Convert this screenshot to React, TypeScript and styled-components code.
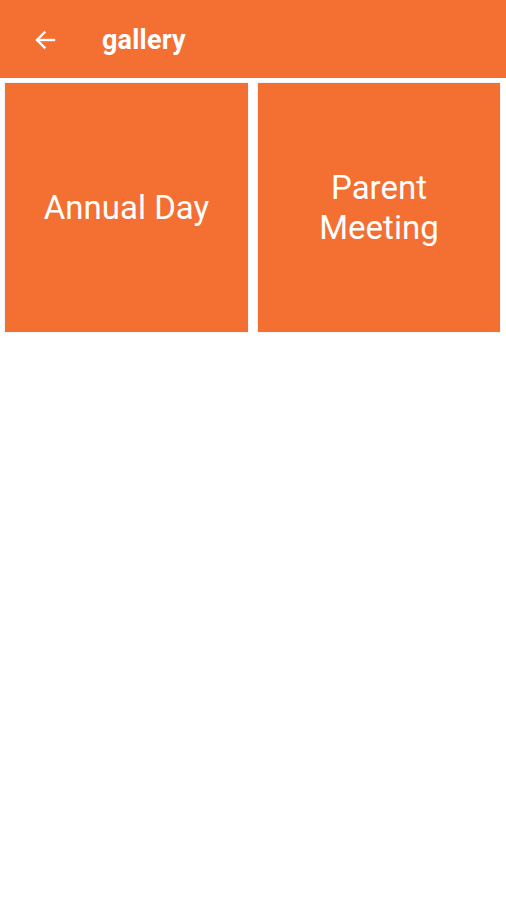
import React from 'react';
import styled, { createGlobalStyle } from 'styled-components';

const GlobalStyle = createGlobalStyle`
    html, body {
        margin: 0;
        padding: 0;
        background: #ffffff;
        font-family: Roboto, "Noto Sans", sans-serif;
    }
`;

const ORANGE = '#f36f32';

const Page = styled.div`
    width: 506px;
    min-height: 900px;
    background: #ffffff;
`;

const Toolbar = styled.header`
    height: 78px;
    background: ${ORANGE};
    display: flex;
    align-items: center;
    padding-left: 32px;
    padding-top: 2px;
    box-sizing: border-box;
    color: #ffffff;
`;

const BackButton = styled.button`
    border: none;
    background: transparent;
    padding: 0;
    width: 26px;
    height: 26px;
    display: flex;
    align-items: center;
    justify-content: center;
    color: #ffffff;
    cursor: pointer;
`;

const Title = styled.h1`
    margin: 0 0 0 44px;
    font-size: 27px;
    font-weight: 700;
    letter-spacing: 0.2px;
`;

const Grid = styled.div`
    display: grid;
    grid-template-columns: 243px 242px;
    column-gap: 10px;
    padding: 5px 5px 0 5px;
`;

const Tile = styled.div`
    height: 249px;
    background: ${ORANGE};
    display: flex;
    align-items: center;
    justify-content: center;
    text-align: center;
    color: #ffffff;
    font-size: 33px;
    line-height: 40px;
    box-shadow: 0 0 1px rgba(0, 0, 0, 0.25);
`;

const TileLabel = styled.span`
    white-space: pre-line;
`;

const albums = [
    { id: 1, name: 'Annual Day' },
    { id: 2, name: 'Parent\nMeeting' },
];

const ArrowBack = () => (
    <svg width="24" height="24" viewBox="0 0 24 24" fill="none" stroke="currentColor" strokeWidth="2.4" strokeLinecap="square">
        <path d="M21 12H4.5" />
        <path d="M11.5 4.5L4 12l7.5 7.5" />
    </svg>
);

const App = () => (
    <Page>
        <GlobalStyle />
        <Toolbar>
            <BackButton aria-label="back">
                <ArrowBack />
            </BackButton>
            <Title>gallery</Title>
        </Toolbar>
        <Grid>
            {albums.map((album) => (
                <Tile key={album.id}>
                    <TileLabel>{album.name}</TileLabel>
                </Tile>
            ))}
        </Grid>
    </Page>
);

export default App;
